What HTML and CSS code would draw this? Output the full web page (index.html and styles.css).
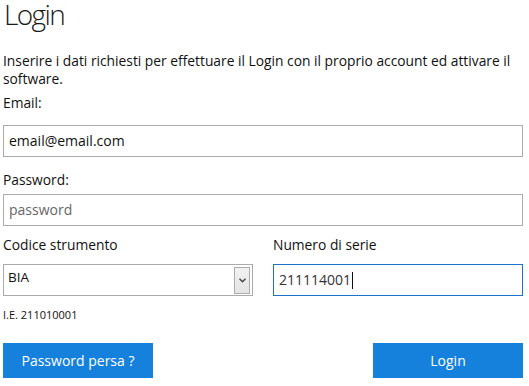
FILE: index.html
```html
<!DOCTYPE html>
<html lang="it">
<head>
<meta charset="utf-8">
<title>Login</title>
<link rel="stylesheet" href="styles.css">
</head>
<body>
<main class="page">
  <h1 class="title">Login</h1>
  <p class="intro">Inserire i dati richiesti per effettuare il Login con il proprio account ed attivare il software.</p>
  <label class="label label-email">Email:</label>
  <div class="field">email@email.com</div>
  <label class="label label-password">Password:</label>
  <div class="field placeholder">password</div>
  <div class="row">
    <div class="col">
      <label class="label label-row">Codice strumento</label>
      <div class="field select">
        <span class="select-value">BIA</span>
        <span class="select-arrow">
          <svg width="7" height="5" viewBox="0 0 7 5"><path d="M0.5 0.8 L3.5 3.8 L6.5 0.8" fill="none" stroke="#444" stroke-width="1.4"/></svg>
        </span>
      </div>
      <div class="hint">I.E. 211010001</div>
    </div>
    <div class="col">
      <label class="label label-row">Numero di serie</label>
      <div class="field focused">211114001<span class="caret"></span></div>
    </div>
  </div>
  <div class="actions">
    <button class="btn">Password persa ?</button>
    <button class="btn">Login</button>
  </div>
</main>
</body>
</html>
```
FILE: styles.css
```css
html, body {
  margin: 0;
  padding: 0;
  background: #fff;
}
body {
  font-family: "Open Sans", "Noto Sans", sans-serif;
  color: #111;
}
.page {
  width: 520px;
  padding: 0 6px 0 3px;
  display: flex;
  flex-direction: column;
}
.title {
  margin: 0;
  font-weight: 300;
  font-size: 28px;
  line-height: 28px;
  letter-spacing: -1.6px;
  color: #1a1a1a;
  padding-left: 1px;
}
.intro {
  margin: 24px 0 0;
  font-size: 13.8px;
  line-height: 18px;
}
.label {
  display: block;
  font-size: 13.8px;
  line-height: 18px;
}
.label-email {
  margin: 6px 0 13px;
}
.label-password {
  margin: 14px 0 5px;
}
.label-row {
  margin: 10px 0 10px;
}
.field {
  box-sizing: border-box;
  height: 32px;
  border: 1px solid #ababab;
  padding: 0 5px;
  font-size: 14px;
  line-height: 30px;
  color: #111;
  display: flex;
  align-items: center;
}
.placeholder {
  color: #666;
}
.row {
  display: grid;
  grid-template-columns: 250px 250px;
  column-gap: 20px;
}
.select {
  padding-left: 4px;
  padding-right: 2px;
  justify-content: space-between;
  font-size: 13.5px;
}
.select-value {
  align-self: flex-start;
  line-height: 25px;
}
.select-arrow {
  box-sizing: border-box;
  width: 16px;
  height: 27px;
  border: 1px solid #acacac;
  background: linear-gradient(#f2f2f2, #e4e4e4);
  display: flex;
  align-items: center;
  justify-content: center;
}
.focused {
  border-color: #1a73c9;
  color: #333;
}
.caret {
  display: inline-block;
  width: 1px;
  height: 17px;
  background: #111;
  margin-left: 1px;
}
.hint {
  font-size: 11px;
  line-height: 14px;
  margin-top: 12px;
  color: #111;
}
.actions {
  display: flex;
  justify-content: space-between;
  margin-top: 21px;
}
.btn {
  width: 150px;
  height: 35px;
  border: 0;
  background: #1681dc;
  color: #fff;
  font-family: "Open Sans", "Noto Sans", sans-serif;
  font-size: 14px;
  padding: 0;
}
```
